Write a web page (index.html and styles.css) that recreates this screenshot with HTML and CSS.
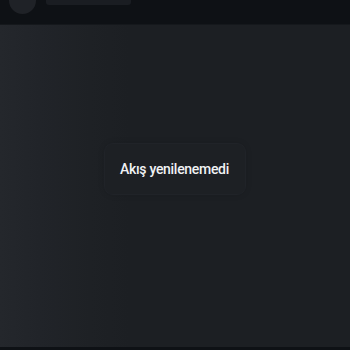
FILE: index.html
```html
<!DOCTYPE html>
<html lang="tr">
<head>
<meta charset="utf-8">
<link rel="stylesheet" href="styles.css">
</head>
<body>
<div class="app">
  <header class="topbar">
    <div class="avatar"></div>
    <div class="title-skel"></div>
  </header>
  <main class="feed">
    <div class="toast">Akış yenilenemedi</div>
  </main>
  <div class="bottom"></div>
</div>
</body>
</html>
```
FILE: styles.css
```css
html, body {
  margin: 0;
  padding: 0;
  width: 350px;
  height: 350px;
  overflow: hidden;
  background: #1c1f23;
  font-family: Roboto, "Noto Sans", sans-serif;
}
.app {
  display: flex;
  flex-direction: column;
  height: 350px;
}
.topbar {
  height: 25px;
  flex: none;
  background: #0e1115;
  display: flex;
  align-items: flex-end;
  padding-left: 9px;
  gap: 10px;
  border-bottom: 1px solid #15181c;
  box-sizing: border-box;
  overflow: hidden;
}
.avatar {
  width: 27px;
  height: 27px;
  border-radius: 50%;
  background: #1f2227;
  margin-bottom: 10px;
  flex: none;
}
.title-skel {
  width: 85px;
  height: 10px;
  border-radius: 3px;
  background: #1a1d22;
  margin-bottom: 19px;
  flex: none;
}
.feed {
  flex: 1;
  display: flex;
  align-items: center;
  justify-content: center;
  background: linear-gradient(90deg, #24272c 0px, #212429 40px, #1e2125 90px, #1c1f23 130px, #1c1f23 100%);
}
.toast {
  width: 142px;
  height: 52px;
  box-sizing: border-box;
  display: flex;
  align-items: center;
  justify-content: center;
  background: #1d2024;
  border: 1px solid #202328;
  border-radius: 9px;
  color: #f1f2f4;
  font-size: 14px;
  font-weight: 500;
  letter-spacing: -0.3px;
  line-height: 18px;
  white-space: nowrap;
  margin-top: -34px;
  margin-left: -1px;
  box-shadow: 0 0 6px rgba(0,0,0,0.12);
}
.bottom {
  height: 3px;
  flex: none;
  background: #0e1115;
}
```
